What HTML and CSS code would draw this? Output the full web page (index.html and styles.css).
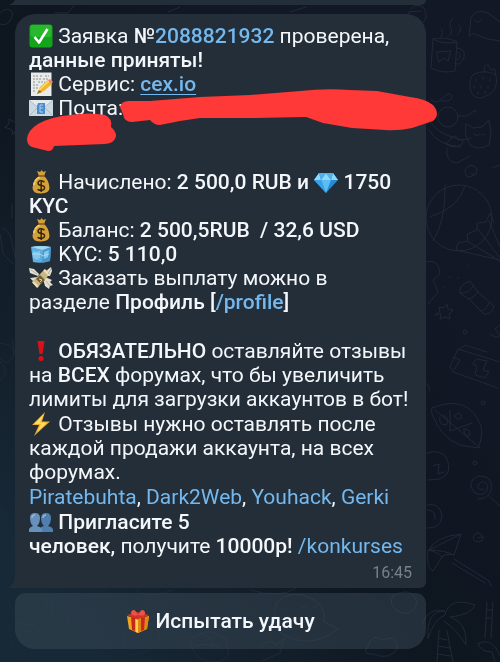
FILE: index.html
```html
<!DOCTYPE html>
<html lang="ru">
<head>
    <meta charset="UTF-8">
    <meta name="viewport" content="width=device-width, initial-scale=1.0">
    <title>Чат с ботом</title>
    <link rel="stylesheet" href="styles.css">
</head>
<body>
    <!-- Chat wallpaper -->
    <svg class="wallpaper" viewBox="0 0 500 662" preserveAspectRatio="xMaxYMin slice" aria-hidden="true">
        <!-- mug -->
        <path d="M433 39q14-3 24 3l-2 29q-13 3-24-3l2-29q10 6 24 3M457 48q9 1 7 9q-2 8-9 7M457 52q4 1 3 5q-2 4-4 3M437 52l14-1l-3 10l-4-3l-5 4zM441 37q3-5 0-8M449 36q5-5 1-9q-1-5 3-9M457 35q6-5 2-10"/>
        <!-- whale -->
        <path d="M469 36l2-18q5-10 17-5l12 9M469 36q5-4 8-1q10 5 23 6M475 20q3 5 6 0"/>
        <!-- strawberry -->
        <path d="M474 74q12-5 22 1q4 17-14 23q-10 1-12-10q-1-10 4-14M485 72q-3-7 3-7l3 5q7-3 4 5M476 79v2M483 77v2M490 79v2M474 86v2M481 86v2M488 86v2M478 92v2M485 91v2"/>
        <!-- planet and cat -->
        <circle cx="448" cy="117" r="10"/>
        <path d="M431 100q5 5 12-2q6-7 9-2q1 6-11 5M458 115q6 3 12-1q7-6 6-2M429 130q8 15 32 17M430 122q10 12 22 15q10 5 19 1M466 124l7 4l9-1l7-7l2 13l-2 12q-10 6-19 0l-4-9zM474 134l3 2l3-2M482 135l3-1M447 148q-2 14 10 15l13-7M450 140q5-8 9 0q6-1 3 4q-8 6-16 0z"/>
        <!-- balls, swirl and stars -->
        <circle cx="459" cy="218" r="33"/>
        <path d="M430 217q29-9 35-31M433 241q13-20 12-56M476 174q-11 8-11-4q6-9 12-1q0 7-6 5M492 168l8-3M456 250l2-7l10-2l-1-7l10-4l0-7l9-1l4-9l4 10M456 250l44 10M467 241l33 20M478 229l22 29M489 221l11 26M425 262q14-4 15 12l-7 6l5 12l-10 12M435 315l5-4l-1-4l5 1l3-4l1 5l5 1l-4 4l1 5l-5-2l-5 2l1-5z"/>
        <!-- flashlight -->
        <path d="M460 293q-2-8 10-12l8 11l16 14q-2 9-10 8l-14-14zM460 293q9 1 14-8M468 299q6-1 10-7M480 311q6 0 9-8M444 287h1M449 277h1M468 265v1M458 278h1"/>
        <!-- suitcase, pizza -->
        <path d="M450 367l8-18l42 13M450 367l3 5l45 16M453 357l7 3l-6 10M460 349l5-4l22 7M477 359l10 2l-4 9l6 2l-4 6l-10-3l2-9l-4-2zM432 408q36-15 49 18q2 11-3 22l-18-3q-19-7-28-31zM435 410l30 25l15 13M450 410v21l22-8M443 415q8 4 3 10q-8 0-6-8M454 416q6-6 8 1q-3 5-8-1M464 429q8 0 5 7q-6 0-5-7M490 334q6 5 10 2l-5-7l5-4M426 383q4 4 4 8"/>
        <circle cx="465" cy="332" r="2"/><circle cx="483" cy="403" r="2"/><circle cx="475" cy="463" r="2"/>
        <!-- bulb, lollipop -->
        <path d="M427 453q12-4 19 4q8 16-6 22l-12 1M433 466l6-2l-1 10l6-2M484 489q-7 2-6-4q6-7 10 1q-2 12-13 7q-10-11 3-17q16-1 13 15q-3 8-13 8M489 496l11 10M427 505q13-3 15 11q-1 13-15 12M427 510q9 0 8 9M478 538q6-3 4 3q-8 3-9-4q5-9 11 1"/>
        <!-- umbrella -->
        <path d="M429 550q5-13 32-16l-7 21q-8-2-12 2l-9 14q-7-2-5-21q10 2 14 7M429 550q15 0 25 5M429 550q20-10 32-16M454 559l35 22l2 5M452 563l33 20"/>
        <!-- palm tree -->
        <path d="M422 624q7-18 23-13q-19-1-17 28q5-19 17-24q4-19 30-10q-4 10-25 12q18 6 16 28q-9-15-22-24M439 630l-2 32M447 631l6 31M438 638l9 2M438 646l12 2M437 654l14 2M478 644q14-8 22 12M478 644q3 8 14 8l3 10M487 602l-2 36M493 602l-2 36M487 610h5M486 618h5"/>
        <!-- left side -->
        <path d="M0 13q9-8 13 1q-4 14-13 10M5 127l4-3l0-5l5 3l5-2l-1 5l4 4l-6 1l-3 5l-1-5zM2 228q8 1 10 14l3 15M0 234l3 20l10 10M12 205v13M0 358q9 11 14-6q-2-8-14-9M12 339q2 9 2 17M0 361q11 10 0 20M0 508l9 8M3 551q3-5 4-10q8-9 8 5M2 551l2 12q5 8 11 5M8 570v2"/>
        <!-- strip between bubble and button, and behind the button -->
        <path d="M10 592q-4 28 20 34q19-3 16-29l-11-8M8 626q14-8 30 3q-4 20-22 31zM12 631q10-4 22 3M52 602q22-17 18 12q-2 19-13 13q-7-4-5-25M79 629l7-14M87 616l9-14M90 618l10-13M127 626q22-13 33 9q-6 20-30 20q-13-11-3-29M190 640q17-16 36-1q8 22-11 23q-21 1-25-22M199 634q14 0 14 13M195 646q15-5 27 3M250 590q30 9 46-2M277 602q15-14 36-3q15 10 10 22l15 8q-29 22-57 4q-11-10-4-31M302 608l4-2M313 608l4-2M299 619q8 5 14-1M393 596q19-11 24 7q-5 16-20 8q-9-7-4-15M368 646q4-14 15-6q12-6 15 8q-8 13-25 6q-12 1-5-8M260 648q8-12 16-3l8-7l-4 15l-18 8M55 590l8-3M100 592l9-5M137 589q8 12 35 1M55 13h13l6-8M168 12l12-5M290 12l16-5M411 9q5-7 13-1q5 11-2 15M411 20l-3-8l13-1"/>
    </svg>

    <!-- Emoji set -->
    <svg class="sprite" aria-hidden="true">
        <symbol id="e-check" viewBox="0 0 24 24">
            <rect x="0.5" y="0.5" width="23" height="23" rx="3" fill="#12a51b"/>
            <rect x="1.5" y="1" width="21" height="12" rx="2" fill="#27b82d"/>
            <path d="M5.500 13l4.500 5.500L18.500 5" fill="none" stroke="#fff" stroke-width="2.600" stroke-linejoin="round"/>
        </symbol>
        <symbol id="e-memo" viewBox="0 0 24 24">
            <path d="M2 0.500h20.500V24H2z" fill="#e9ebe9"/>
            <path d="M4 4h5M11 4h3M16 4h4M4 7h8M14 7h6M4 10h3M9 10h7M4 13h6M4 16h5M4 19h3" stroke="#8c9091" stroke-width="1" stroke-dasharray="2 1"/>
            <path d="M8 22l3-7L19 8l4 4l-8 7z" fill="#efb52f"/>
            <path d="M10 18L20 9" stroke="#ffdc66" stroke-width="1.500"/>
            <path d="M19 8l2-1l3 3l-2 2z" fill="#e98675"/>
            <path d="M8 22l2-4l3 2z" fill="#a26d28"/>
        </symbol>
        <symbol id="e-mail" viewBox="0 0 24 24">
            <path d="M0 4h24v16H0z" fill="#cbd8e2"/>
            <path d="M0 4l12 10L24 4M0 20l9-9M24 20l-9-9" fill="#e3e9ed" stroke="#9fb0bd" stroke-width="0.700"/>
            <path d="M9 7h7v11H8V10z" fill="#4a8ccc"/>
            <path d="M14 9h-3v7h3M11 12h3" fill="none" stroke="#a5d0f4" stroke-width="1"/>
        </symbol>
        <symbol id="e-bag" viewBox="0 0 24 24">
            <path d="M8 1l3 1l2-2l1 2l3-1l-2 5q5 4 5.500 12q0 5-8.500 5.500Q3.500 23.500 3.500 18Q4 10 10 6z" fill="#d5a035"/>
            <path d="M6 11q2-3 5-4M5 15q0-2 1-3" stroke="#f5cf70" stroke-width="1.800" fill="none"/>
            <path d="M9 6h7" stroke="#7d531c" stroke-width="1.500"/>
            <path d="M15.500 12q-6-3-6.500 1q0 2 3 2.500q4 0 3.500 3q-1 3-7 1M12.200 10v12" fill="none" stroke="#322611" stroke-width="1.500"/>
        </symbol>
        <symbol id="e-ice" viewBox="0 0 24 24">
            <path d="M2 5q10-2 20 0l-1 14q-9 3-17 1z" fill="#5eaede"/>
            <path d="M2 5q10-2 20 0l-8 3z" fill="#a3d8f0"/>
            <path d="M14 8l-1 13l8-2l1-14z" fill="#4797cd"/>
            <path d="M4 9l4 1l3-1v7l-3 2l-4-2zM15 10l5-2l-1 7l-4 2z" fill="#82c6e9"/>
            <path d="M3 12h8l3 2l6-2" fill="none" stroke="#b9e2f5" stroke-width="0.800"/>
        </symbol>
        <symbol id="e-wings" viewBox="0 0 24 24">
            <path d="M9 10L1 7L0 2l5 1l5 5zM9 11l-8 1l3 3l6-2M14 13l2 7l4 3l1-3l3-1l-3-3l2-2l-7-3M16 10l1-5l5-4l1 4l-2 5z" fill="#e4dfd1"/>
            <path d="M3 16l13-13l5 5L8 22z" fill="#c7b985"/>
            <path d="M4 16l5 5M15 4l5 5" stroke="#eee2b8" stroke-width="2"/>
            <path d="M7 13l5 5l4-4l-5-5z" fill="#735f31"/>
            <path d="M10 13l3 1l-2 2" fill="none" stroke="#ebd68c" stroke-width="1"/>
            <path d="M2 4l6 4M19 8l3-5M17 15l4 5" stroke="#aaa492" stroke-width="0.800"/>
        </symbol>
        <symbol id="e-gem" viewBox="0 0 24 24">
            <path d="M5 3h14l5 7l-12 13L0 10z" fill="#2589dc"/>
            <path d="M5 3L0 10h7zM12 3L7 10h10zM19 3l-2 7h7z" fill="#8ed8fa"/>
            <path d="M5 3h7l-5 7zM12 3h7l-2 7z" fill="#4cb3ee"/>
            <path d="M7 10h10l-5 13z" fill="#5abdf3"/>
            <path d="M0 10h7l5 13z" fill="#3ba1e7"/>
        </symbol>
        <symbol id="e-mark" viewBox="0 0 24 24">
            <path d="M8.500 2h7l-2 13h-3z" fill="#dc1118"/>
            <circle cx="12" cy="19.500" r="2.500" fill="#dc1118"/>
        </symbol>
        <symbol id="e-bolt" viewBox="0 0 24 24">
            <path d="M16 0L3 13l7 0L5 24L21 9.500l-8 0z" fill="#f0aa2c"/>
            <path d="M15 2L5 12l7 0l-4 8L18 10.500l-7 0z" fill="#ffdf61"/>
        </symbol>
        <symbol id="e-people" viewBox="0 0 24 24">
            <g fill="#4f7fae">
                <path d="M11 22V19q0-2 4-3q-3-3-3-8q0-5 5-5q5 0 5 5q0 5-3 8q5 1 5 4v2z"/>
                <path d="M0 22v-3q1-2 4-3Q1 13 1 8q0-5 5-5q5 0 5 5q0 5-3 8q4 1 5 3v3z" fill="#6791bb"/>
            </g>
            <path d="M3 8q0-3 3-3M14 8q0-3 3-3" stroke="#96b6d5" stroke-width="1.500" fill="none"/>
        </symbol>
        <symbol id="e-gift" viewBox="0 0 24 24">
            <path d="M1 7l11 3l11-3l-2 13l-9 4l-9-4z" fill="#f0a51e"/>
            <path d="M1 6l10-3l12 3l-11 5z" fill="#d33227"/>
            <path d="M12 10l11-3l-2 13l-9 4z" fill="#dc8713"/>
            <path d="M5 8l4 1v13l-3-1zM15 9l4-1l-1 13l-3 1z" fill="#c9261e"/>
            <path d="M12 6Q5 8 5 3q3-5 7 3q4-8 7-3q1 5-7 3" fill="#ed5246"/>
            <path d="M10 10l2 1v13l-2-1z" fill="#ffd33f"/>
        </symbol>
    </svg>

    <main class="chat">
        <div class="bubble bubble-previous"></div>

        <article class="bubble message">
            <p class="block">
                <svg class="emoji"><use href="#e-check"/></svg> Заявка <b>№<a href="#">2088821932</a></b> проверена,<br>
                <b>данные приняты!</b><br>
                <svg class="emoji"><use href="#e-memo"/></svg> Сервис: <a class="underlined" href="#"><b>cex.io</b></a><br>
                <svg class="emoji"><use href="#e-mail"/></svg> Почта:
            </p>

            <p class="block block-balance">
                <svg class="emoji"><use href="#e-bag"/></svg> Начислено: <b>2 500,0 RUB и <svg class="emoji"><use href="#e-gem"/></svg> 1750<br>
                KYC</b><br>
                <svg class="emoji"><use href="#e-bag"/></svg> Баланс: <b>2 500,5RUB &nbsp;/ 32,6 USD</b><br>
                <svg class="emoji"><use href="#e-ice"/></svg> KYC: <b>5 110,0</b><br>
                <svg class="emoji"><use href="#e-wings"/></svg> Заказать выплату можно в<br>
                разделе <b>Профиль [<a href="#">/profile</a>]</b>
            </p>

            <div class="notes">
                <p>
                    <svg class="emoji"><use href="#e-mark"/></svg> <b>ОБЯЗАТЕЛЬНО</b> оставляйте отзывы<br>
                    на <b>ВСЕХ</b> форумах, что бы увеличить<br>
                    лимиты для загрузки аккаунтов в бот!
                </p>
                <p>
                    <svg class="emoji"><use href="#e-bolt"/></svg> Отзывы нужно оставлять после<br>
                    каждой продажи аккаунта, на всех<br>
                    форумах.
                </p>
                <p><a href="#">Piratebuhta</a>, <a href="#">Dark2Web</a>, <a href="#">Youhack</a>, <a href="#">Gerki</a></p>
                <p>
                    <svg class="emoji"><use href="#e-people"/></svg> <b>Пригласите 5<br>
                    человек,</b> получите <b>10000р!</b> <a href="#">/konkurses</a>
                </p>
            </div>

            <time class="time" datetime="16:45">16:45</time>

            <!-- Marker strokes over the e-mail address -->
            <svg class="marker" viewBox="15 14 425 140" aria-hidden="true">
                <path d="M120 107Q121 101 129 101L150 101L200 97L250 95L300 91Q326 88 350 90L377 91L410 97Q426 99 433 105Q441 114 433 121L412 128Q398 131 385 130L352 128L323 123L306 117L250 118L200 118L180 121L160 125Q154 125 150 120L132 122Q124 122 123 114Z"/>
                <path d="M27 139Q28 130 38 124Q50 117 70 115Q90 112 105 115Q113 119 111 127Q116 131 116 136Q115 143 105 144L54 146Q53 151 48 151L32 147Q27 145 27 139Z"/>
            </svg>
        </article>

        <button class="reply-button" type="button">
            <svg class="emoji"><use href="#e-gift"/></svg> Испытать удачу
        </button>
    </main>
</body>
</html>
```
FILE: styles.css
```css
* {
    margin: 0;
    padding: 0;
    box-sizing: border-box;
}

body {
    min-height: 100vh;
    background: linear-gradient(to bottom left, #131827 20%, #0e161f 55%, #172836 90%);
    color: #f4f7fa;
    font-family: Roboto, "Liberation Sans", sans-serif;
    font-size: 21px;
    line-height: 24px;
    overflow-x: hidden;
}

b {
    font-weight: 500;
}

a {
    color: #74b8ee;
    text-decoration: none;
}

.underlined {
    text-decoration: underline;
    text-decoration-thickness: 1px;
    text-underline-offset: 3px;
}

.wallpaper {
    position: fixed;
    inset: 0;
    width: 100%;
    height: 100%;
    fill: none;
    stroke: #202a38;
    stroke-width: 1;
    stroke-linecap: round;
    stroke-linejoin: round;
}

.sprite {
    position: absolute;
    width: 0;
    height: 0;
}

.emoji {
    width: 24px;
    height: 24px;
    vertical-align: bottom;
}

.chat {
    position: relative;
    padding: 0 74px 12px 15px;
}

.bubble {
    position: relative;
    background-color: #232e39;
}

.bubble-previous {
    height: 5px;
    margin-bottom: 9px;
    border-bottom-right-radius: 6px;
}

.message {
    padding: 10px 14px 5px;
    border-radius: 20px 20px 6px 0;
    white-space: nowrap;
}

/* Tail at the bottom left corner */
.bubble::before {
    content: "";
    position: absolute;
    left: -6px;
    bottom: 0;
    width: 6px;
    height: 12px;
    background-color: #232e39;
    clip-path: polygon(100% 0, 100% 100%, 0 100%, 70% 50%);
}

.bubble-previous::before {
    height: 5px;
}

.block-balance {
    margin-top: 50px;
}

.notes {
    display: flex;
    flex-direction: column;
    gap: 1px;
    margin-top: 25px;
}

.time {
    display: block;
    margin-top: 5px;
    color: #76818b;
    font-size: 16px;
    line-height: 20px;
    text-align: right;
}

.marker {
    position: absolute;
    top: 0;
    left: 0;
    width: 425px;
    height: 140px;
    fill: #ff3838;
}

.reply-button {
    display: block;
    width: 100%;
    margin-top: 5px;
    padding: 16px;
    border: none;
    border-radius: 10px 10px 20px 20px;
    background-color: rgba(62, 78, 92, 0.45);
    color: #f4f7fa;
    font: inherit;
    font-weight: 500;
    cursor: pointer;
}
```
